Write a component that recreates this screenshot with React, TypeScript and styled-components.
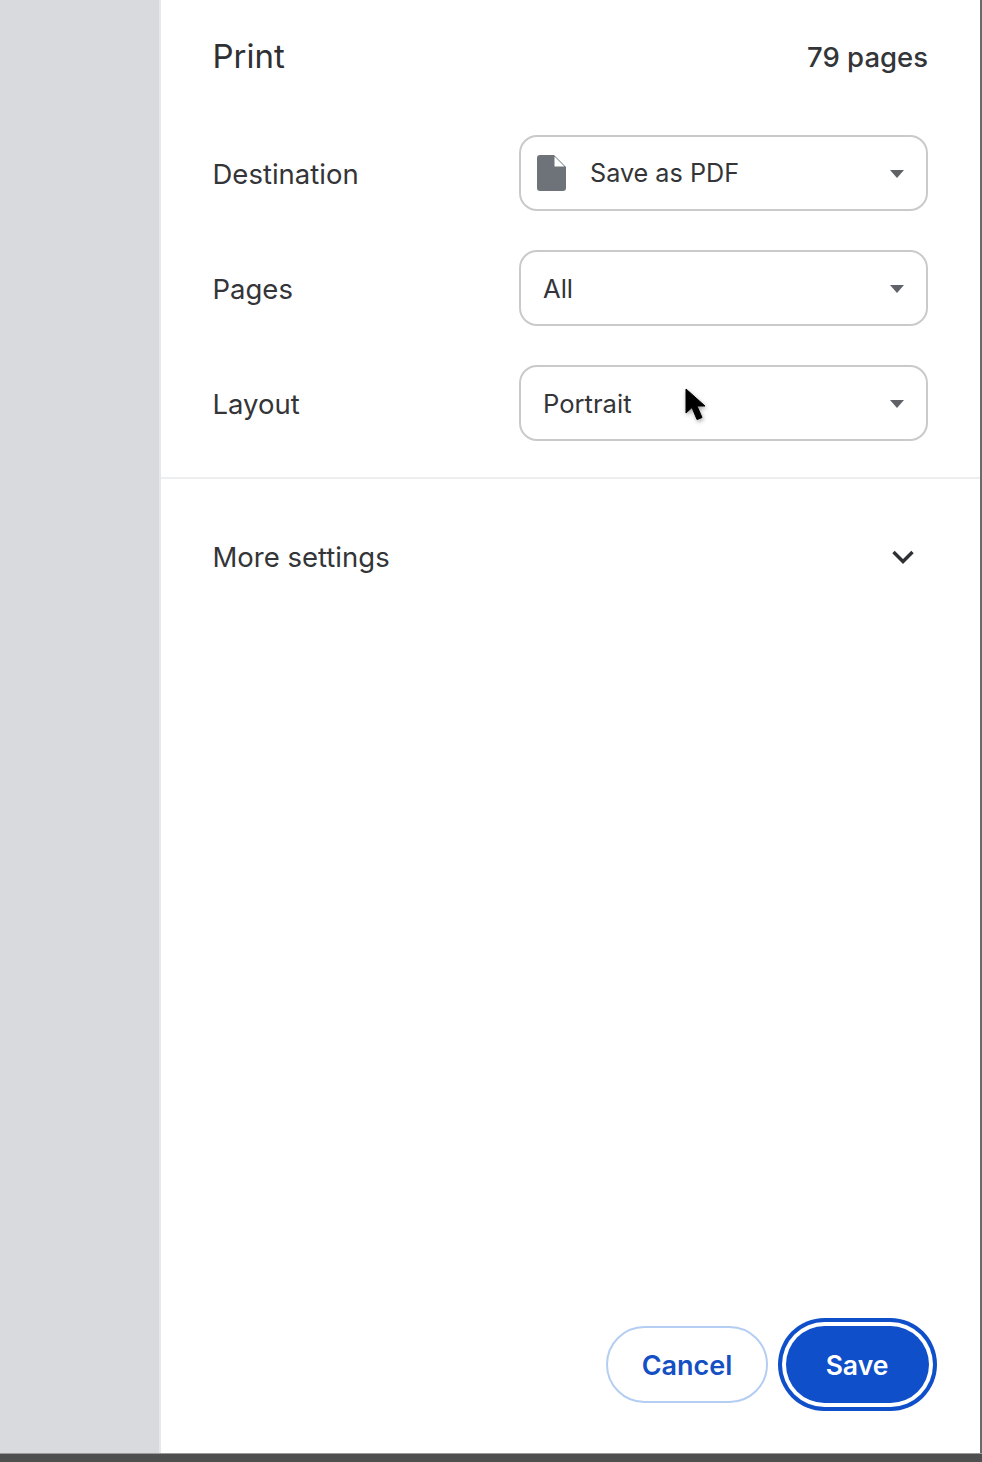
import { createGlobalStyle } from "styled-components";
import styled from "styled-components";

const GlobalStyle = createGlobalStyle`
  html, body {
    margin: 0;
    padding: 0;
    background: #4f4f4f;
  }
  body {
    font-family: Inter, "Liberation Sans", sans-serif;
    -webkit-font-smoothing: antialiased;
  }
`;

const Screen = styled.div`
  width: 982px;
  height: 1462px;
  display: flex;
  flex-direction: column;
  overflow: hidden;
`;

const Window = styled.div`
  height: 1453px;
  display: flex;
  border-bottom: 1px solid #9a9a9a;
`;

const Preview = styled.div`
  width: 159px;
  background: #d9dadd;
  border-right: 2px solid #e6e7ea;
`;

const Sheet = styled.div`
  flex: 1;
  display: flex;
  flex-direction: column;
  background: #fff;
  color: #2e3033;
`;

const Edge = styled.div`
  width: 2px;
  background: #6a6a6a;
`;

const Header = styled.div`
  display: flex;
  align-items: center;
  justify-content: space-between;
  height: 112px;
  padding: 0 52px 0 51.5px;
`;

const Title = styled.h1`
  margin: 0 0 1px;
  font-size: 33px;
  font-weight: 400;
  color: #2e3033;
`;

const PageCount = styled.span`
  font-size: 27.5px;
  font-weight: 500;
  color: #333538;
  margin-top: 1px;
`;

const Settings = styled.div`
  display: flex;
  flex-direction: column;
  gap: 39px;
  padding: 23px 52px 36px 51.5px;
  border-bottom: 2px solid #eceef0;
`;

const Label = styled.span`
  font-size: 27.5px;
  color: #333538;
`;

const Row = styled.div`
  display: flex;
  align-items: center;
  justify-content: space-between;

  ${Label} {
    padding-top: 2px;
  }
`;

const Select = styled.div<{ $icon?: boolean }>`
  position: relative;
  box-sizing: border-box;
  width: 409px;
  height: 76px;
  display: flex;
  align-items: center;
  gap: 24px;
  padding: 0 22px 0 ${(p) => (p.$icon ? "16px" : "22px")};
  border: 2px solid #c9cacc;
  border-radius: 18px;
  font-size: 25.5px;
  color: #333538;
`;

const SelectText = styled.span<{ $tight?: boolean }>`
  flex: 1;
  font-size: ${(p) => (p.$tight ? "25.2px" : "25.6px")};
`;

const Pointer = styled.svg`
  position: absolute;
  left: 164px;
  top: 21px;
  filter: drop-shadow(1px 2px 2px rgba(0, 0, 0, 0.35));
`;

const ArrowIcon = styled.svg`
  margin-top: 2px;
`;

const MoreRow = styled.div`
  display: flex;
  align-items: center;
  justify-content: space-between;
  height: 156px;
  padding: 0 65px 0 51.5px;
`;

const Spacer = styled.div`
  flex: 1;
`;

const Footer = styled.div`
  display: flex;
  justify-content: flex-end;
  align-items: center;
  gap: 18px;
  padding: 0 51px 50px 0;
`;

const Button = styled.button<{ $primary?: boolean }>`
  box-sizing: border-box;
  height: 77px;
  width: ${(p) => (p.$primary ? "143px" : "162px")};
  border-radius: 39px;
  font: 600 ${(p) => (p.$primary ? "26.5px" : "27px")} Inter, "Liberation Sans", sans-serif;
  padding: ${(p) => (p.$primary ? "0 1px 0 0" : "1px 0 0")};
  color: ${(p) => (p.$primary ? "#fff" : "#1450c4")};
  background: ${(p) => (p.$primary ? "#0f4fc9" : "#fff")};
  border: ${(p) => (p.$primary ? "none" : "2px solid #b4cdf2")};
  box-shadow: ${(p) => (p.$primary ? "0 0 0 4px #fff, 0 0 0 8px #0f4fc9" : "none")};
`;

const Arrow = () => (
  <ArrowIcon width="14" height="8" viewBox="0 0 14 8">
    <path d="M0 0h14L7 8z" fill="#5f6368" />
  </ArrowIcon>
);

const DocIcon = () => (
  <svg width="29" height="36" viewBox="0 0 29 36">
    <path
      d="M3 0h14l12 12v21a3 3 0 0 1-3 3H3a3 3 0 0 1-3-3V3a3 3 0 0 1 3-3z"
      fill="#6d7379"
    />
    <path d="M17.5 1.5 27.5 11.5H17.5z" fill="#fff" />
  </svg>
);

export default function App() {
  return (
    <Screen>
      <GlobalStyle />
      <Window>
        <Preview />
        <Sheet>
          <Header>
            <Title>Print</Title>
            <PageCount>79 pages</PageCount>
          </Header>
          <Settings>
            <Row>
              <Label>Destination</Label>
              <Select $icon>
                <DocIcon />
                <SelectText $tight>Save as PDF</SelectText>
                <Arrow />
              </Select>
            </Row>
            <Row>
              <Label>Pages</Label>
              <Select>
                <SelectText>All</SelectText>
                <Arrow />
              </Select>
            </Row>
            <Row>
              <Label>Layout</Label>
              <Select>
                <SelectText>Portrait</SelectText>
                <Arrow />
                <Pointer width="22" height="36" viewBox="0 0 22 36">
                  <path
                    d="M1 1v24l6-5.5 5 12 5-2-5-11.5h8z"
                    fill="#000"
                    stroke="#000"
                    strokeWidth="1"
                  />
                </Pointer>
              </Select>
            </Row>
          </Settings>
          <MoreRow>
            <Label>More settings</Label>
            <svg width="24" height="16" viewBox="0 0 24 16">
              <path d="M2.5 3 12 12.5 21.5 3" fill="none" stroke="#2e3033" strokeWidth="3.4" />
            </svg>
          </MoreRow>
          <Spacer />
          <Footer>
            <Button>Cancel</Button>
            <Button $primary>Save</Button>
          </Footer>
        </Sheet>
        <Edge />
      </Window>
    </Screen>
  );
}
